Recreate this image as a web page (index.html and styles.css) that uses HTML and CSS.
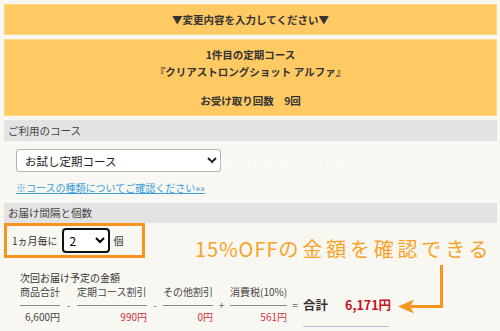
FILE: index.html
```html
<!DOCTYPE html>
<html lang="ja">
<head>
<meta charset="utf-8">
<title>定期コース変更</title>
<link rel="stylesheet" href="styles.css">
</head>
<body>
<div class="page">
  <div class="notice">▼変更内容を入力してください▼</div>
  <div class="course-box">
    <p>1件目の定期コース</p>
    <p>『クリアストロングショット アルファ』</p>
    <p class="count">お受け取り回数　9回</p>
  </div>
  <div class="sec-head">ご利用のコース</div>
  <div class="sec-body">
    <select class="course-select"><option>お試し定期コース</option></select>
    <a class="course-link" href="#">※コースの種類についてご確認ください»»</a>
  </div>
  <div class="sec-head sec-head2">お届け間隔と個数</div>
  <div class="interval-row">
    <div class="interval-box">
      <span>1ヵ月毎に</span>
      <select class="qty"><option>2</option></select>
      <span>個</span>
    </div>
    <div class="note"><span class="latin">15%OFF</span>の金額を確認できる</div>
  </div>
  <div class="calc">
    <div class="calc-title">次回お届け予定の金額</div>
    <div class="calc-grid">
      <div class="lbl">商品合計</div><div></div>
      <div class="lbl">定期コース割引</div><div></div>
      <div class="lbl">その他割引</div><div></div>
      <div class="lbl">消費税(10%)</div><div></div><div></div>

      <div class="line"></div><div class="op">-</div>
      <div class="line"></div><div class="op">-</div>
      <div class="line"></div><div class="op">+</div>
      <div class="line"></div><div class="op">=</div>
      <div class="total"><span class="total-lbl">合計</span><span class="total-val">6,171円</span></div>

      <div class="val">6,600円</div><div></div>
      <div class="val red">990円</div><div></div>
      <div class="val red">0円</div><div></div>
      <div class="val red">561円</div><div></div>
      <div class="total-under"></div>
    </div>
  </div>
</div>
<div class="watermark">www.arf-tunisie.com/</div>
<svg class="arrow" width="500" height="331" viewBox="0 0 500 331">
  <path d="M441.5 265 V306.5 H410" fill="none" stroke="#f5961f" stroke-width="3"/>
  <polygon points="398,306.5 414,299.5 410,306.5 414,313.5" fill="#f5961f"/>
</svg>
</body>
</html>
```

FILE: styles.css
```css
* { box-sizing: border-box; }
html, body { margin: 0; padding: 0; }
body {
  width: 500px;
  height: 331px;
  overflow: hidden;
  background: #f9f7f2;
  font-family: "Noto Sans CJK JP", "Noto Sans", sans-serif;
  color: #333;
  font-size: 10px;
  position: relative;
}
.page {
  padding: 4px 3px 0 4px;
}
.notice, .course-box {
  background: #ffca64;
  border: 1px solid #ffd88a;
  text-align: center;
  font-weight: bold;
  font-size: 10.5px;
  line-height: 17px;
  color: #333;
}
.notice {
  padding: 6px 0;
  height: 31px;
}
.course-box {
  margin-top: 4px;
  padding: 6px 0;
  height: 77px;
}
.course-box p { margin: 0; }
.course-box .count { margin-top: 12px; }

.sec-head {
  margin-top: 4px;
  background: #e3e3e3;
  height: 21px;
  line-height: 21px;
  padding-left: 4px;
  font-size: 10.5px;
  color: #444;
}
.sec-head2 {
  margin-top: 0;
  height: 20px;
  line-height: 20px;
}
.sec-body {
  height: 62px;
  padding: 8px 0 0 12px;
  display: flex;
  flex-direction: column;
  align-items: flex-start;
}
.course-select {
  width: 205px;
  height: 23px;
  font-family: "Noto Sans CJK JP", sans-serif;
  font-size: 11.5px;
  color: #222;
  background: #fff;
  border: 1px solid #b3b3b3;
  border-radius: 3px;
  padding: 0 4px;
}
.course-link {
  margin-top: 9px;
  color: #3b9ddc;
  text-decoration: underline;
  font-size: 10px;
  line-height: 14px;
}

.interval-row {
  display: flex;
  align-items: flex-start;
}
.interval-box {
  width: 141px;
  height: 35px;
  border: 3px solid #f7941d;
  display: flex;
  align-items: center;
  padding-left: 5px;
  color: #333;
  font-size: 10px;
}
.qty {
  width: 48px;
  height: 25px;
  margin: 0 4px 0 4px;
  font-family: "Noto Sans CJK JP", sans-serif;
  font-size: 12px;
  color: #000;
  background: #fff;
  border: 2px solid #111;
  border-radius: 4px;
  padding: 0 2px;
}
.note {
  margin: 15px 0 0 50px;
  color: #f7a327;
  font-size: 20px;
  line-height: 22px;
  letter-spacing: 3.8px;
  font-weight: 400;
  white-space: nowrap;
}
.note .latin { letter-spacing: 1px; }

.calc {
  padding: 11px 0 0 16px;
}
.calc-title {
  line-height: 14px;
  color: #333;
  font-size: 10px;
}
.calc-grid {
  display: grid;
  grid-template-columns: 40px 17px 70px 16px 50px 17px 57px 16px auto;
  grid-template-rows: 14px 12px 16px;
  font-size: 10px;
  color: #444;
}
.lbl { line-height: 14px; white-space: nowrap; }
.line { border-bottom: 1px solid #8a8a8a; height: 7px; }
.op { text-align: center; line-height: 12px; color: #666; font-size: 10px; }
.val { text-align: right; line-height: 12px; }
.red { color: #d0333b; }
.total {
  display: flex;
  gap: 17px;
  line-height: 12px;
  font-weight: bold;
  font-size: 12.5px;
  white-space: nowrap;
}
.total-lbl { color: #333; }
.total-val { color: #c5121f; }
.total-under {
  width: 86px;
  height: 16px;
  border-bottom: 1px solid #c5b9de;
}

.watermark {
  position: absolute;
  left: 196px;
  top: 152px;
  font-family: "Open Sans", sans-serif;
  font-style: italic;
  font-size: 17px;
  color: #ffffff;
  opacity: 0.7;
  pointer-events: none;
}
.arrow {
  position: absolute;
  left: 0;
  top: 0;
  pointer-events: none;
}
```
